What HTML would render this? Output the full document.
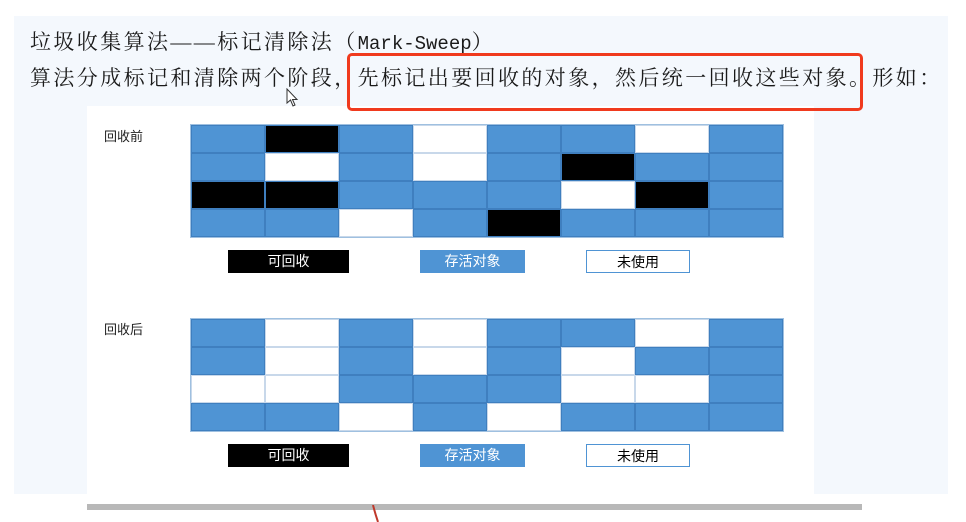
<!DOCTYPE html>
<html><head><meta charset="utf-8"><style>
body{margin:0;width:966px;height:522px;background:#fff;position:relative;overflow:hidden;font-family:"Liberation Sans","Noto Sans CJK SC",sans-serif}
.a{position:absolute}
.g{position:absolute;display:grid;grid-template-columns:repeat(8,74px);grid-template-rows:repeat(4,28px);border:1px solid #9fc0e0}
.g div{box-sizing:border-box;border:1px solid #3f7fbf}
.B{background:#4f94d4}.K{background:#000}.W{background:#fff;border-color:#c8d8ea!important}
.t{font-family:"Liberation Serif","Noto Serif CJK SC",serif;font-size:21px;letter-spacing:2.4px;color:#1a1a1a;white-space:nowrap;line-height:24px}
.m{font-family:"Liberation Mono",monospace;font-size:19px;letter-spacing:0}
.lg{position:absolute;height:23px;font-size:14px;line-height:23px;text-align:center;box-sizing:border-box}
.lab{position:absolute;font-size:13px;color:#222}
</style></head><body>
<div class="a" style="left:14px;top:16px;width:934px;height:478px;background:#f4f8fd"></div>
<div class="a" style="left:87px;top:106px;width:727px;height:396px;background:#fff"></div>
<div class="a" style="left:87px;top:504px;width:775px;height:6px;background:#b8b8b8"></div>
<div class="a t" style="left:30px;top:30px">垃圾收集算法——标记清除法（<span class="m">Mark-Sweep</span>）</div>
<div class="a t" style="left:30px;top:66px">算法分成标记和清除两个阶段，先标记出要回收的对象，然后统一回收这些对象。形如：</div>
<div class="a" style="left:347px;top:53px;width:510px;height:52px;border:3px solid #f03a1e;border-radius:5px"></div>
<div class="lab" style="left:104px;top:126px">回收前</div>
<div class="lab" style="left:104px;top:319px">回收后</div>
<div class="g" style="left:190px;top:124px">
<div class="B"></div><div class="K"></div><div class="B"></div><div class="W"></div><div class="B"></div><div class="B"></div><div class="W"></div><div class="B"></div>
<div class="B"></div><div class="W"></div><div class="B"></div><div class="W"></div><div class="B"></div><div class="K"></div><div class="B"></div><div class="B"></div>
<div class="K"></div><div class="K"></div><div class="B"></div><div class="B"></div><div class="B"></div><div class="W"></div><div class="K"></div><div class="B"></div>
<div class="B"></div><div class="B"></div><div class="W"></div><div class="B"></div><div class="K"></div><div class="B"></div><div class="B"></div><div class="B"></div>
</div>
<div class="g" style="left:190px;top:318px">
<div class="B"></div><div class="W"></div><div class="B"></div><div class="W"></div><div class="B"></div><div class="B"></div><div class="W"></div><div class="B"></div>
<div class="B"></div><div class="W"></div><div class="B"></div><div class="W"></div><div class="B"></div><div class="W"></div><div class="B"></div><div class="B"></div>
<div class="W"></div><div class="W"></div><div class="B"></div><div class="B"></div><div class="B"></div><div class="W"></div><div class="W"></div><div class="B"></div>
<div class="B"></div><div class="B"></div><div class="W"></div><div class="B"></div><div class="W"></div><div class="B"></div><div class="B"></div><div class="B"></div>
</div>
<div class="lg" style="left:228px;top:250px;width:121px;background:#000;color:#fff">可回收</div>
<div class="lg" style="left:420px;top:250px;width:105px;background:#4f94d4;color:#fff">存活对象</div>
<div class="lg" style="left:586px;top:250px;width:104px;background:#fff;border:1px solid #4f94d4;color:#000">未使用</div>
<div class="lg" style="left:228px;top:444px;width:121px;background:#000;color:#fff">可回收</div>
<div class="lg" style="left:420px;top:444px;width:105px;background:#4f94d4;color:#fff">存活对象</div>
<div class="lg" style="left:586px;top:444px;width:104px;background:#fff;border:1px solid #4f94d4;color:#000">未使用</div>
<svg class="a" style="left:286px;top:88px" width="14" height="20"><path d="M1 1 L1 15 L4.5 12 L7 18 L9 17 L6.5 11.5 L11 11.5 Z" fill="#fff" stroke="#333" stroke-width="1"/></svg>
<svg class="a" style="left:370px;top:505px" width="12" height="17"><path d="M3 0 Q5 8 8 17" stroke="#c0392b" stroke-width="2" fill="none"/></svg>
</body></html>
